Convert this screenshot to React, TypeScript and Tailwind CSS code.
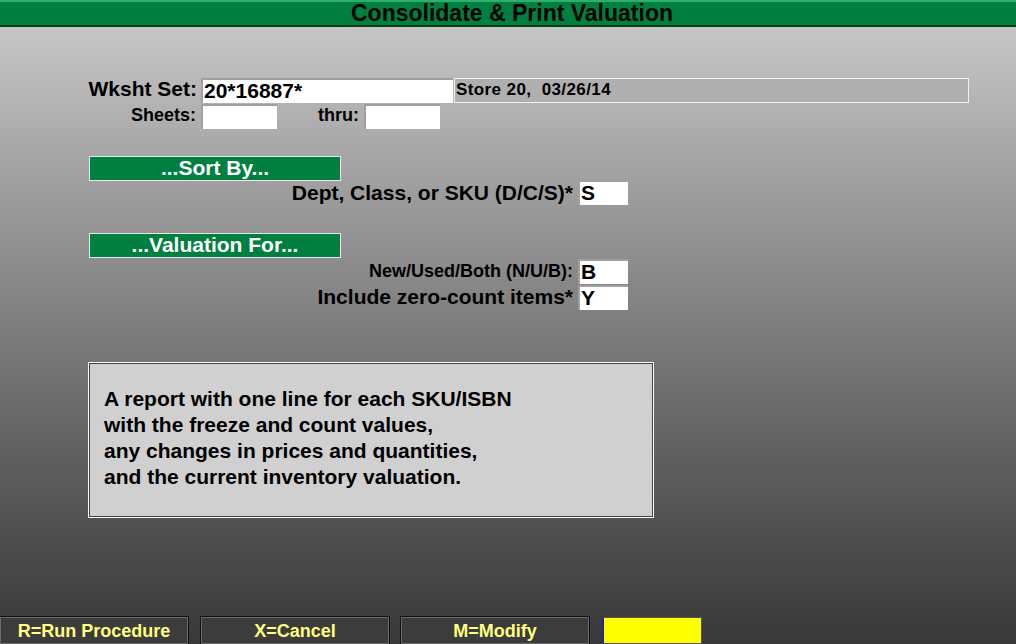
import React from "react";

const font = { fontFamily: '"Liberation Sans", Arial, sans-serif' };

function Field({ value, className }: { value?: string; className: string }) {
  return (
    <div
      className={`bg-white border-t-2 border-l-2 border-[#a0a0a0] font-bold text-black leading-none flex items-center pl-[1px] pb-[2px] ${className}`}
    >
      {value}
    </div>
  );
}

function SectionBar({ label }: { label: string }) {
  return (
    <div className="w-[252px] h-[25px] bg-[#008040] border border-[#e8e8e8] text-white font-bold text-[21px] leading-none flex items-center justify-center pb-[2px]">
      {label}
    </div>
  );
}

function FnKey({ label, className }: { label: string; className: string }) {
  return (
    <div
      className={`h-[27px] bg-[#3c3c3c] border border-[#6a6a6a] outline outline-1 outline-[#111] text-[#ffff80] font-bold text-[18px] leading-none flex items-center justify-center ${className}`}
    >
      {label}
    </div>
  );
}

export default function App() {
  return (
    <div
      className="w-[1016px] h-[644px] overflow-hidden flex flex-col bg-gradient-to-b from-[#cdcdcd] to-[#383838]"
      style={font}
    >
      <div className="h-[27px] shrink-0 bg-[#008040] border-t-2 border-[#2fae6e] border-b-2 border-b-[#00400f] flex items-center justify-center text-black font-bold text-[23px] leading-none pl-[8px]">
        Consolidate &amp; Print Valuation
      </div>

      <div className="flex-1 flex flex-col">
        <div className="mt-[50px] flex items-center h-[26px]">
          <div className="w-[197px] text-right font-bold text-[21px] leading-none text-black pb-[3px]">Wksht Set:</div>
          <Field value="20*16887*" className="ml-[4px] w-[252px] h-[25px] text-[21px]" />
          <div className="ml-[1px] w-[515px] h-[25px] bg-[#afafaf] border border-[#f0f0f0] flex items-center pl-[1px] pb-[2px] font-bold text-[17px] tracking-[0.4px] leading-none text-black whitespace-pre">
            Store 20,  03/26/14
          </div>
        </div>

        <div className="flex items-center h-[26px]">
          <div className="w-[196px] text-right font-bold text-[18px] leading-none text-black pb-[2px]">Sheets:</div>
          <Field className="ml-[5px] w-[76px] h-[25px]" />
          <div className="ml-[26px] w-[56px] text-right font-bold text-[18px] leading-none text-black pb-[2px]">thru:</div>
          <Field className="ml-[5px] w-[76px] h-[25px]" />
        </div>

        <div className="mt-[27px] pl-[89px]">
          <SectionBar label="...Sort By..." />
        </div>
        <div className="flex items-center h-[25px] -mt-[1px]">
          <div className="w-[573px] text-right font-bold text-[21px] leading-none text-black pb-[1px]">Dept, Class, or SKU (D/C/S)*</div>
          <Field value="S" className="ml-[5px] w-[50px] h-[25px] text-[21px]" />
        </div>

        <div className="mt-[28px] pl-[89px]">
          <SectionBar label="...Valuation For..." />
        </div>
        <div className="flex items-center h-[26px]">
          <div className="w-[573px] text-right font-bold text-[18px] leading-none text-black">New/Used/Both (N/U/B):</div>
          <Field value="B" className="ml-[5px] w-[50px] h-[25px] text-[21px]" />
        </div>
        <div className="flex items-center h-[26px]">
          <div className="w-[573px] text-right font-bold text-[21px] leading-none text-black pb-[2px]">Include zero-count items*</div>
          <Field value="Y" className="ml-[5px] w-[50px] h-[25px] text-[21px]" />
        </div>

        <div className="mt-[52px] ml-[88px] w-[566px] h-[156px] border border-white">
          <div className="w-full h-full bg-[#d0d0d0] border border-[#404040] pl-[14px] pt-[22px] font-bold text-[21px] leading-[26px] text-black">
            <div>A report with one line for each SKU/ISBN</div>
            <div>with the freeze and count values,</div>
            <div>any changes in prices and quantities,</div>
            <div>and the current inventory valuation.</div>
          </div>
        </div>
      </div>

      <div className="h-[27px] shrink-0 flex items-end">
        <FnKey label="R=Run Procedure" className="w-[188px]" />
        <FnKey label="X=Cancel" className="ml-[13px] w-[188px]" />
        <FnKey label="M=Modify" className="ml-[12px] w-[188px]" />
        <div className="ml-[13px] w-[100px] h-[27px] bg-[#ffff00] border border-[#555] border-l-2 border-l-[#2020c0]" />
      </div>
    </div>
  );
}
